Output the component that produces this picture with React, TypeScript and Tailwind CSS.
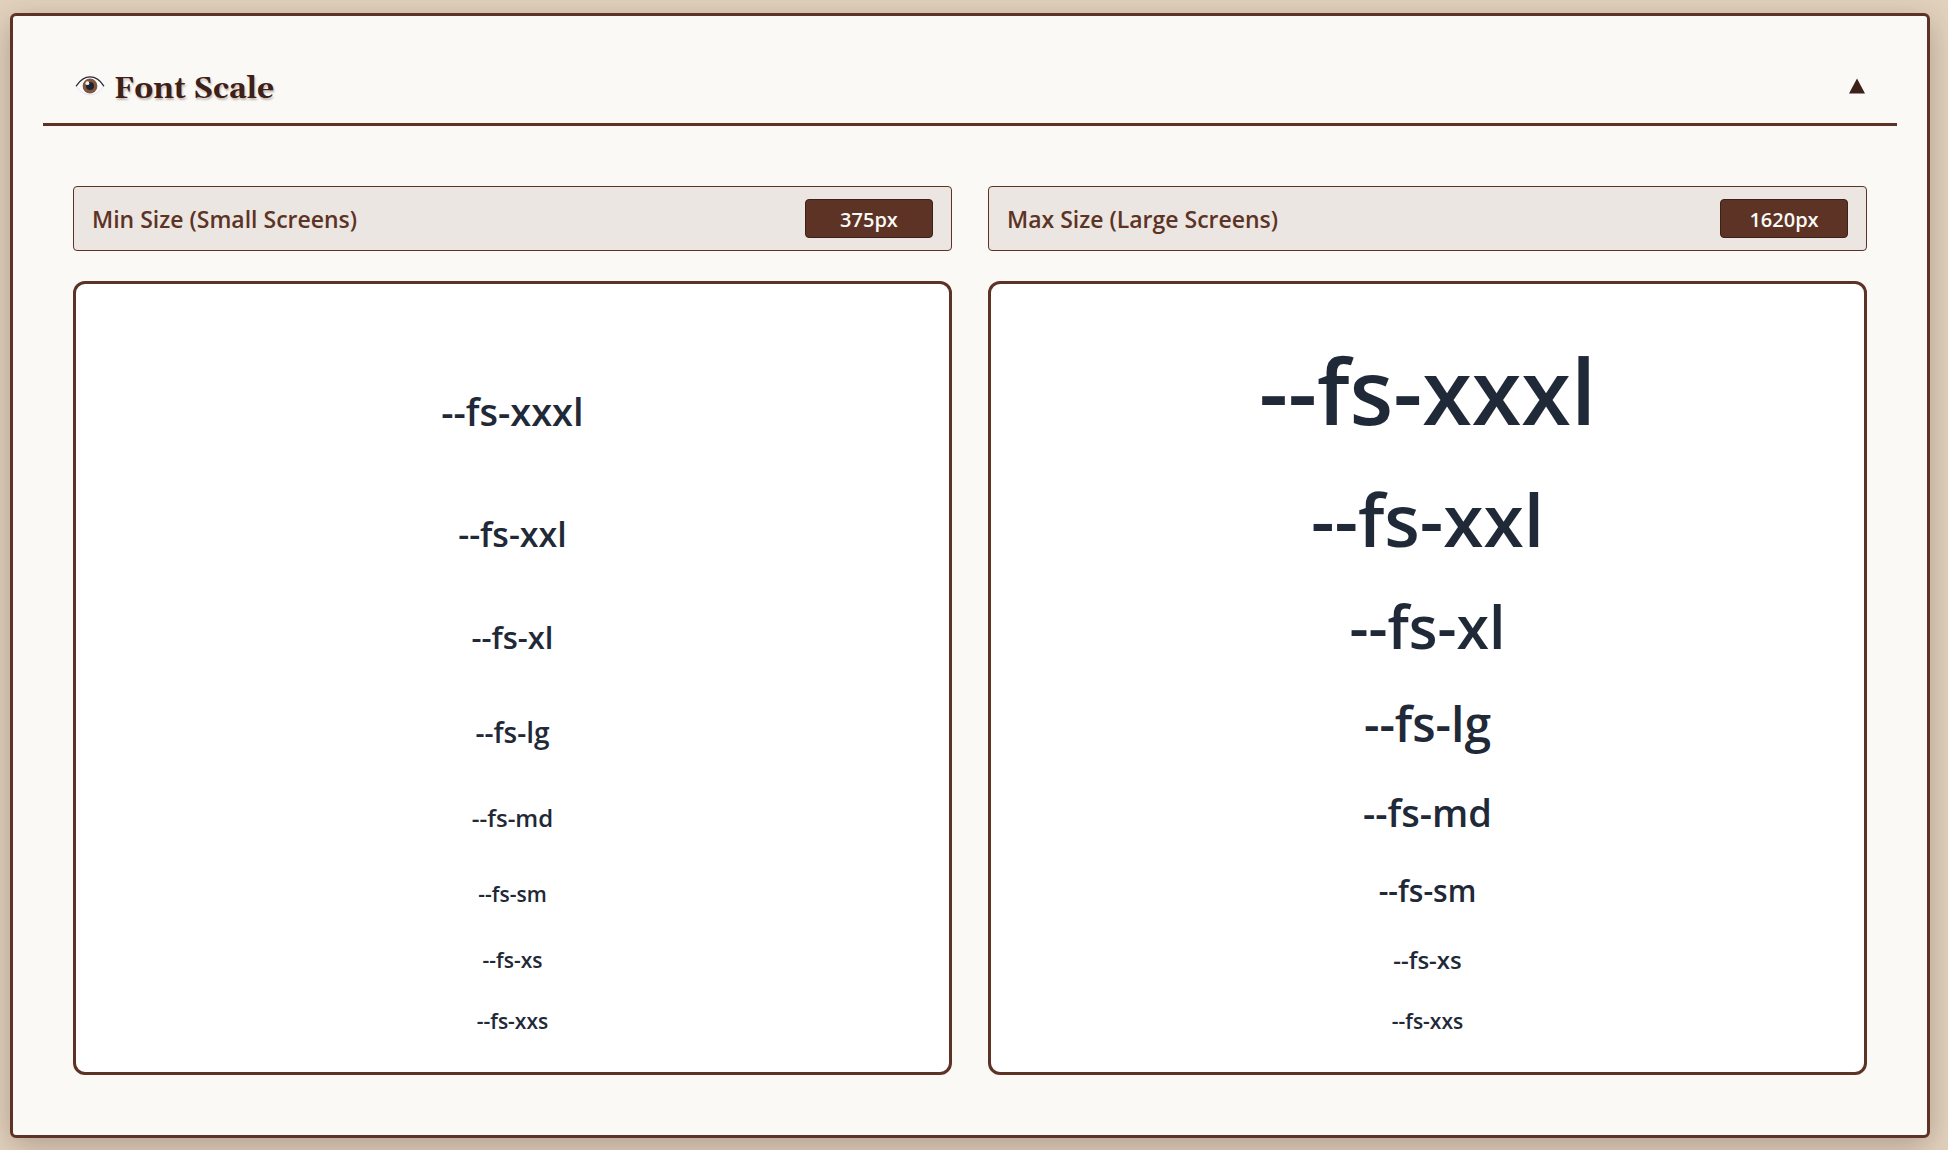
import { useState } from 'react';

type Step = { name: string; row: string; min: string; max: string };

const steps: Step[] = [
  { name: '--fs-xxxl', row: 'h-[94px]', min: 'text-[38px]', max: 'text-[90px]' },
  { name: '--fs-xxl', row: 'h-[122px]', min: 'text-[34px]', max: 'text-[73px]' },
  { name: '--fs-xl', row: 'h-[102px]', min: 'text-[31px]', max: 'text-[59px]' },
  { name: '--fs-lg', row: 'h-[93px]', min: 'text-[28px]', max: 'text-[48px]' },
  { name: '--fs-md', row: 'h-[84px]', min: 'text-[24px]', max: 'text-[38px]' },
  { name: '--fs-sm', row: 'h-[76px]', min: 'text-[21px]', max: 'text-[30px]' },
  { name: '--fs-xs', row: 'h-[66px]', min: 'text-[21px]', max: 'text-[24px]' },
  { name: '--fs-xxs', row: 'h-[61px]', min: 'text-[21px]', max: 'text-[21px]' },
];

function EyeIcon() {
  return (
    <svg viewBox="0 0 34 22" className="h-[22px] w-[34px] shrink-0" aria-hidden="true">
      <path d="M3.5 11C8 4.5 12.500 2.200 17 2.200S26.500 4.500 30.500 11C27 17 22 19.800 17 19.800S7 17 3.500 11Z" fill="#fdfdfe" stroke="#dfe5ee" strokeWidth="1" />
      <circle cx="17" cy="11" r="7.400" fill="#80563f" />
      <circle cx="17" cy="11" r="4" fill="#20242e" />
      <circle cx="14.400" cy="8.200" r="1.900" fill="#f6f1ec" />
      <path d="M3.300 10.800C8 4 12.500 1.900 17 1.900S26.500 4.200 30.700 10.800" fill="none" stroke="#2a2f3c" strokeWidth="1.300" strokeLinecap="round" />
    </svg>
  );
}

function SizeField({ id, label, value }: { id: string; label: string; value: string }) {
  return (
    <div className="flex h-[65px] items-center justify-between rounded-[4px] border border-[#5c3325] bg-[#ebe6e1] px-[18px]">
      <label htmlFor={id} className="pt-0.5 text-[23px] font-semibold text-[#5c3325]">
        {label}
      </label>
      <input
        id={id}
        type="text"
        defaultValue={value}
        className="h-[39px] w-32 rounded-[4px] border border-[#3d2018] bg-[#5c3325] pt-0.5 text-center text-[20px] font-semibold text-[#fbf9f5] outline-none"
      />
    </div>
  );
}

function PreviewPanel({ size }: { size: 'min' | 'max' }) {
  return (
    <div className="rounded-xl border-3 border-[#5c3325] bg-white pt-12 pb-[42px]">
      {steps.map((s) => (
        <div key={s.name} className={`flex items-end justify-center ${s.row}`}>
          <span className={`leading-[0.8] font-semibold text-[#1f2937] ${s[size]}`}>{s.name}</span>
        </div>
      ))}
    </div>
  );
}

export default function App() {
  const [open, setOpen] = useState(true);
  return (
    <div className="min-h-screen bg-[#e3d3be] pt-[13px] pr-[18px] pb-3 pl-[10px] font-['Open_Sans','Noto_Sans',sans-serif]">
      <section className="rounded-md border-3 border-[#5c3325] bg-[#fbf9f5] p-[30px] shadow-[0_8px_32px_rgba(60,30,30,0.3)]">
        <h2>
          <button
            type="button"
            aria-expanded={open}
            onClick={() => setOpen(!open)}
            className="flex h-20 w-full items-center justify-between border-b-3 border-[#5c3325] px-[30px] pt-0.5 text-[#3d2018]"
          >
            <span className="flex items-center gap-[7px]">
              <EyeIcon />
              <span className="pt-1.5 font-['Gelasio','Liberation_Serif',serif] text-[30px] leading-10 font-bold text-shadow-[1px_2px_2px_rgba(60,30,20,0.3)]">
                Font Scale
              </span>
            </span>
            <svg viewBox="0 0 20 16" className={open ? 'h-4 w-5' : 'h-4 w-5 rotate-180'} aria-hidden="true">
              <path d="M10 0.500 18 15.500H2Z" fill="#3d2018" />
            </svg>
          </button>
        </h2>
        {open && (
          <div className="grid grid-cols-2 gap-x-9 gap-y-[30px] px-[30px] pt-[60px] pb-[30px]">
            <SizeField id="min-size" label="Min Size (Small Screens)" value="375px" />
            <SizeField id="max-size" label="Max Size (Large Screens)" value="1620px" />
            <PreviewPanel size="min" />
            <PreviewPanel size="max" />
          </div>
        )}
      </section>
    </div>
  );
}
